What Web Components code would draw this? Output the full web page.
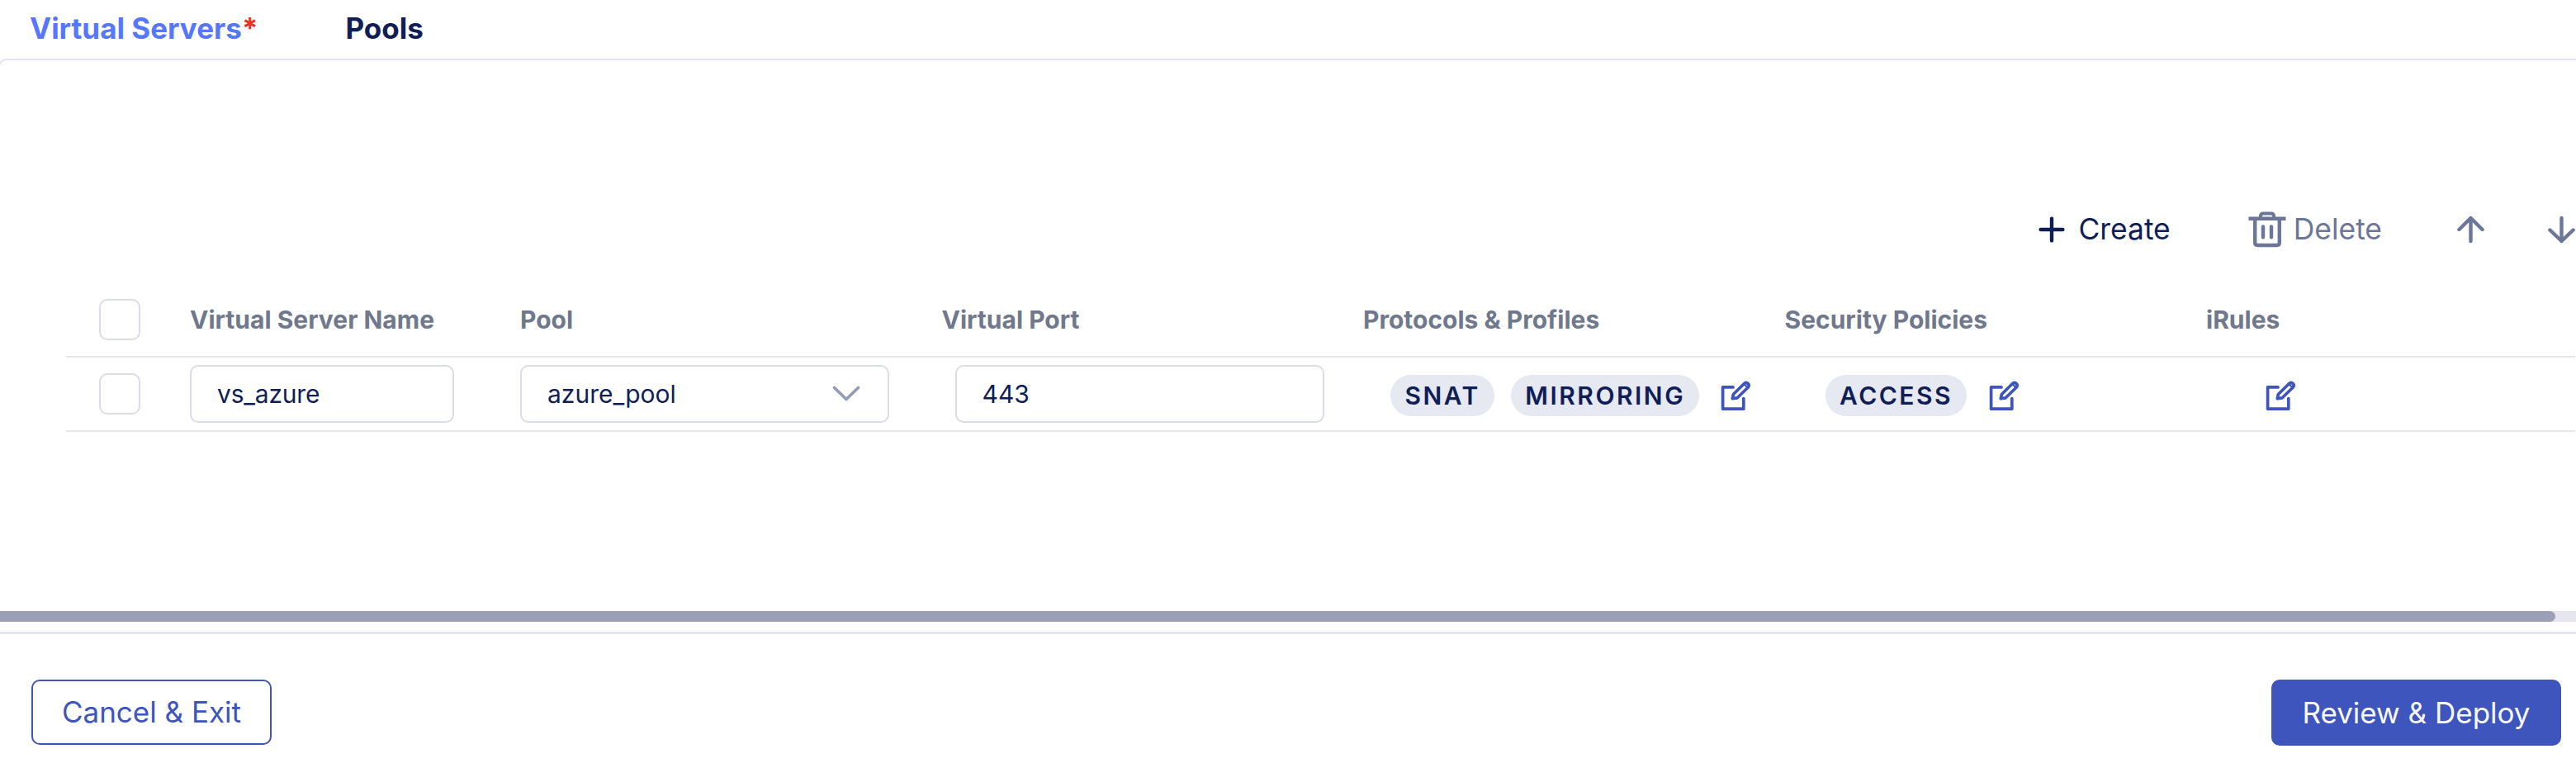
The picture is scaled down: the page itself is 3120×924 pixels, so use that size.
<!DOCTYPE html>
<html lang="en">
<head>
<meta charset="utf-8">
<title>Virtual Servers</title>
<style>
html, body { margin: 0; height: 100%; overflow: hidden; background: #fff; }
body { font-family: Inter, sans-serif; color: #0f1e57; }
</style>
</head>
<body>
<app-shell>
  <app-tabs slot="tabs">
    <app-tab active required>Virtual Servers</app-tab>
    <app-tab>Pools</app-tab>
  </app-tabs>
  <tool-bar slot="tools">
    <tool-action icon="plus">Create</tool-action>
    <tool-action icon="trash" muted>Delete</tool-action>
    <tool-action icon="up" muted></tool-action>
    <tool-action icon="down" muted></tool-action>
  </tool-bar>
  <server-table></server-table>
  <push-button slot="actions">Cancel &amp; Exit</push-button>
  <push-button slot="actions" primary>Review &amp; Deploy</push-button>
</app-shell>

<script>
const ICONS = {
  plus: '<svg width="32" height="32" viewBox="0 0 32 32" fill="none" stroke="currentColor" stroke-width="4.4" stroke-linecap="round"><path d="M16 2.600v26.800M2.600 16h26.800"/></svg>',
  trash: '<svg width="46" height="44" viewBox="0 0 46 44" fill="none" stroke="currentColor" stroke-width="4.400"><path d="M.5 8.700H45.500"/><path d="M8.200 8.700V38Q8.200 41 11.200 41H34.800Q37.800 41 37.800 38V8.700"/><path d="M14.900 8.500V6Q14.900 2.400 18.400 2.400H27.600Q31.100 2.400 31.100 6V8.500" stroke-width="4"/><path d="M18 18.500v12.800M28 18.500v12.800" stroke-linecap="round" stroke-width="4.400"/></svg>',
  up: '<svg width="33" height="34" viewBox="0 0 33 34" fill="none" stroke="currentColor" stroke-width="4.400" stroke-linecap="round" stroke-linejoin="round"><path d="M16.500 31V3M2.400 17 16.500 3l14.100 14"/></svg>',
  down: '<svg width="33" height="34" viewBox="0 0 33 34" fill="none" stroke="currentColor" stroke-width="4.400" stroke-linecap="round" stroke-linejoin="round"><path d="M16.500 3V31M2.400 17.500 16.500 31l14.100-13.500"/></svg>',
  chevron: '<svg width="34" height="20" viewBox="0 0 34 20" fill="none" stroke="currentColor" stroke-width="3.600" stroke-linecap="round" stroke-linejoin="round"><path d="M2.500 2.500 17 16.500l14.500-14"/></svg>',
  edit: '<svg width="37" height="37" viewBox="0 0 37 37" fill="none" stroke="currentColor" stroke-width="3.700" stroke-linecap="round" stroke-linejoin="round"><path d="M15 7.900H2.600V34.200H27.800V21.500"/><path d="M14.300 21.700 15.400 16.500 28.300 3.700Q30.700 1.400 33.200 3.500 35.300 5.700 33.100 8.200L20.200 20.800Z"/><path d="M28.800 4.500 32.300 8" stroke-width="2.200"/></svg>'
};

function define(name, markup, setup) {
  const template = document.createElement('template');
  template.innerHTML = markup;
  customElements.define(name, class extends HTMLElement {
    constructor() {
      super();
      this.attachShadow({ mode: 'open' }).append(template.content.cloneNode(true));
    }
    connectedCallback() { if (setup) setup(this, this.shadowRoot); }
  });
}

define('app-icon', `<style>:host{display:block;flex:none} svg{display:block}</style><span></span>`,
  (el, root) => { root.querySelector('span').innerHTML = ICONS[el.getAttribute('name')]; });

define('app-tab', `<style>
:host{display:block;font-size:35px;font-weight:700;line-height:68px;white-space:nowrap}
:host([active]){color:#5577fb}
i{display:none;font-style:normal;color:#ea3323}
:host([required]) i{display:inline}
</style><slot></slot><i>*</i>`);

define('app-tabs', `<style>
:host{display:flex;height:71px;padding-left:36px;gap:106px;box-sizing:border-box}
</style><slot></slot>`);

define('tool-action', `<style>
:host{display:flex;align-items:center;font-size:35.400px;line-height:44px;white-space:nowrap}
:host([muted]){color:#6c7699}
:host([icon=plus]){gap:16px;margin-right:94px}
:host([icon=trash]){gap:9px;margin-right:91px}
:host([icon=up]){margin-right:77px}
</style><app-icon></app-icon><slot></slot>`,
  (el, root) => {
    const icon = document.createElement('app-icon');
    icon.setAttribute('name', el.getAttribute('icon'));
    root.querySelector('app-icon').replaceWith(icon);
  });

define('tool-bar', `<style>
:host{display:flex;align-items:center;justify-content:flex-end;height:44px}
</style><slot></slot>`);

define('check-box', `<style>
:host{display:block;width:50px;height:50px;box-sizing:border-box;border:2px solid #dbdde6;border-radius:10px;background:#fff}
</style>`);

define('text-field', `<style>
:host{display:flex;align-items:center;justify-content:space-between;box-sizing:border-box;height:70px;width:447px;
border:2px solid #dbdde6;border-radius:10px;padding:0 33px 0 31px;font-size:30px;line-height:60px;background:#fff}
:host([narrow]){width:320px;letter-spacing:-.2px}
app-icon{display:none;color:#959ab5}
:host([select]) app-icon{display:block}
</style><slot></slot><app-icon name="chevron"></app-icon>`);

define('tag-pill', `<style>
:host{display:block;height:50px;line-height:50px;padding:0 17px 0 17.500px;border-radius:25px;background:#e6e8f2;
font-size:30px;font-weight:600;letter-spacing:2.500px;white-space:nowrap}
</style><slot></slot>`);

define('server-table', `<style>
:host{display:block;margin-left:80px}
.row{display:grid;grid-template-columns:150px 400px 510.500px 510.500px 510.500px 510.500px 1fr;align-items:center;
height:90px;box-sizing:border-box;border-bottom:2px solid #e6e6ee}
.head{height:92px;padding-top:2px;font-size:30px;font-weight:700;color:#6f788d;line-height:40px}
check-box{margin-left:40px}
.cell{display:flex;align-items:center;padding-top:4px}
.cell app-icon{color:#3d55bd}
.port{margin-left:16px}
.protocols{padding-left:33px}
.protocols tag-pill+tag-pill{margin-left:20px}
.protocols app-icon{margin-left:26px}
.security{padding-left:49px}
.security app-icon{margin-left:27px}
.rules{padding-left:72px}
</style>
<div class="row head"><check-box></check-box><span>Virtual Server Name</span><span>Pool</span><span>Virtual Port</span><span>Protocols &amp; Profiles</span><span>Security Policies</span><span>iRules</span></div>
<div class="row"><check-box></check-box>
<text-field narrow>vs_azure</text-field>
<text-field select>azure_pool</text-field>
<text-field class="port">443</text-field>
<div class="cell protocols"><tag-pill>SNAT</tag-pill><tag-pill>MIRRORING</tag-pill><app-icon name="edit"></app-icon></div>
<div class="cell security"><tag-pill>ACCESS</tag-pill><app-icon name="edit"></app-icon></div>
<div class="cell rules"><app-icon name="edit"></app-icon></div>
</div>`);

define('scroll-bar', `<style>
:host{display:block;height:13px;background:#e6e7ee}
div{height:13px;width:3095px;background:#9ca0b6;border-radius:0 6.500px 6.500px 0}
</style><div></div>`);

define('push-button', `<style>
:host{display:block;box-sizing:border-box;height:79px;line-height:75px;border:2px solid #3d55bd;border-radius:10px;
width:291px;text-align:center;font-size:35px;color:#3d55bd;white-space:nowrap}
:host([primary]){width:351px;height:80px;line-height:76px;background:#3d55bd;color:#f7f8fd}
</style><slot></slot>`);

define('app-shell', `<style>
:host{display:flex;flex-direction:column;width:3120px;height:924px;overflow:hidden}
.panel{height:669px;box-sizing:border-box;margin:0 -12px 0 -2px;border:2px solid #e2e3ec;border-bottom:0;
border-radius:10px 0 0 0;padding:183px 11px 0 0}
.table{display:block;margin-top:41px}
footer{display:flex;justify-content:space-between;box-sizing:border-box;margin-top:12px;border-top:3px solid #e5e7f0;padding:55px 18px 0 38px;height:159px}
</style>
<slot name="tabs"></slot>
<div class="panel"><slot name="tools"></slot><div class="table"><slot></slot></div></div>
<scroll-bar></scroll-bar>
<footer><slot name="actions"></slot></footer>`);
</script>
</body>
</html>
